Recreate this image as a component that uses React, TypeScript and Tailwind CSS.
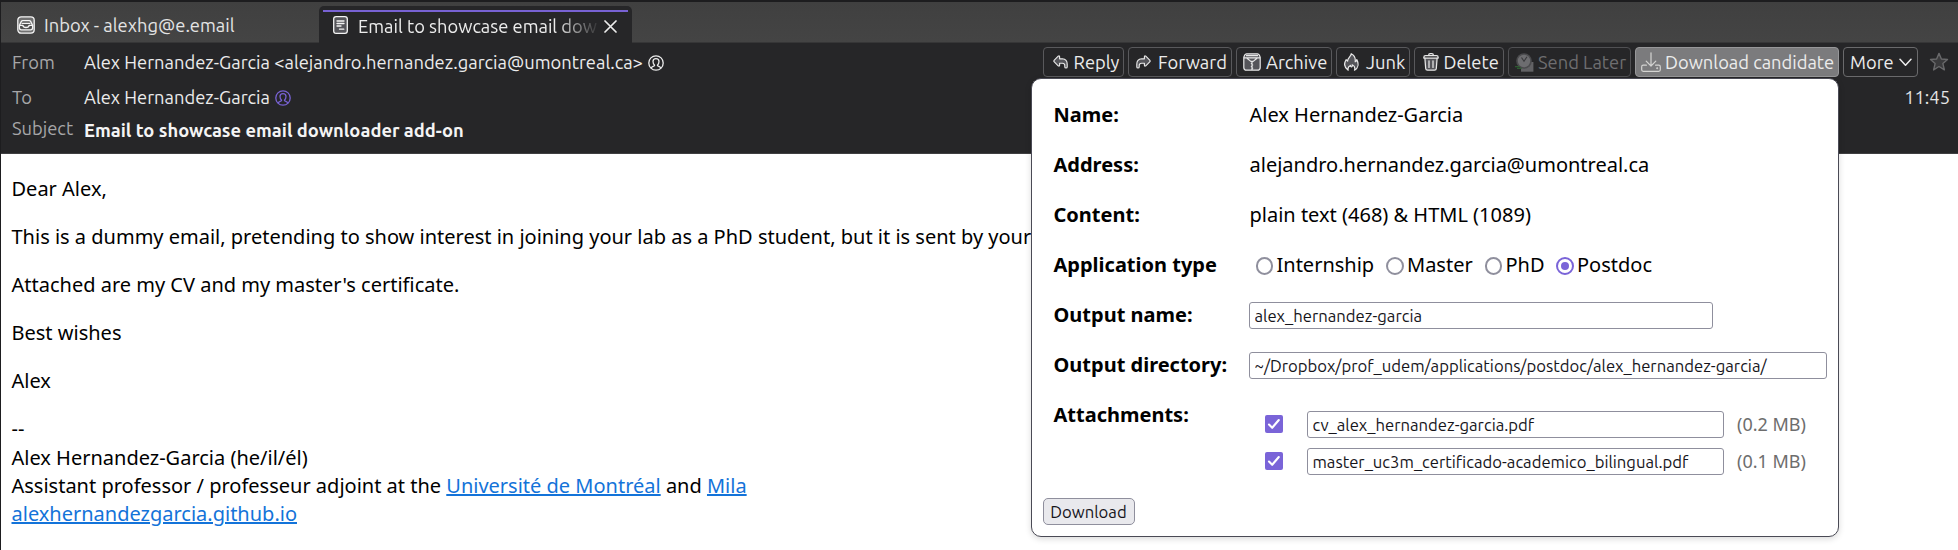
import type { ReactNode } from "react";

const svg = "block shrink-0";

function InboxIcon() {
  return (
    <svg className={svg} width="18" height="18" viewBox="0 0 18 18" fill="none" stroke="#f4f4f4" strokeWidth="1.3" strokeLinejoin="round">
      <rect x="0.8" y="0.8" width="16.4" height="16.4" rx="3.4" fill="#707070" />
      <path d="M2.4 9.4 4.4 5.4Q4.8 4.6 5.8 4.6H12.2Q13.2 4.6 13.6 5.4L15.6 9.4V11.7Q15.6 13.8 13.6 13.8H4.4Q2.4 13.8 2.4 11.7Z" fill="#505050" />
      <path d="M4.6 7.4H13.4M2.6 9.4H5.9C6.3 12.2 11.7 12.2 12.1 9.4H15.4" />
    </svg>
  );
}

function MessageIcon() {
  return (
    <svg className={svg} width="15" height="18" viewBox="0 0 15 18" fill="none" stroke="#f4f4f4" strokeWidth="1.3" strokeLinecap="round">
      <rect x="0.7" y="0.7" width="13.6" height="16.6" rx="2.4" fill="#55555a" />
      <path d="M4 5H11M4 7.5H11M4 10H8M6.5 13.2H10.8" />
    </svg>
  );
}

function ContactIcon({ color }: { color: string }) {
  return (
    <svg className={svg} width="16" height="16" viewBox="0 0 16 16" fill="none" stroke={color} strokeWidth="1.3" strokeLinejoin="round" strokeLinecap="round">
      <circle cx="8" cy="8" r="7.2" />
      <path d="M3.4 13C3.4 11.2 6.6 11.6 6.6 10.2C5.4 9.2 5 7.8 5 6.6C5 4.7 6.2 3.7 8 3.7S11 4.7 11 6.6C11 7.8 10.6 9.2 9.4 10.2C9.4 11.6 12.6 11.2 12.6 13" />
    </svg>
  );
}

function ReplyIcon({ flip = false }: { flip?: boolean }) {
  return (
    <svg className={svg} width="15" height="14" viewBox="0 0 15 14" fill="#55555a" stroke="#e8e8e8" strokeWidth="1.15" strokeLinejoin="round">
      <path transform={flip ? "matrix(-1 0 0 1 15 0)" : undefined} d="M1.3 6.9Q.4 6 1.3 5.1L5.2 1.2Q6.6 .3 6.6 2V3.8H9.4Q14.2 4.2 14.2 9.2V12Q14.2 13 13 13Q11.8 13 11.8 12V10.4Q11.8 8.2 9.4 8.2H6.6V10Q6.6 11.7 5.2 10.8Z" />
    </svg>
  );
}

function ArchiveIcon() {
  return (
    <svg className={svg} width="18" height="18" viewBox="0 0 18 18" fill="none" stroke="#e8e8e8" strokeWidth="1.2" strokeLinejoin="round">
      <path d="M0.8 4.2 1.7 2.1Q2.2 0.8 3.6 0.8H14.4Q15.8 0.8 16.3 2.1L17.2 4.2V14.4Q17.2 17.2 14.4 17.2H3.6Q0.8 17.2 0.8 14.4Z" fill="#55555a" />
      <path d="M1 4.8H17M3 2.7H15M4 5.2 7.8 8.4H10.2L14 5.2M9 8.6V17" />
      <path d="M7.8 10.4H9M9 12H10.2M7.8 13.6H9M9 15.2H10.2" strokeWidth="1" />
    </svg>
  );
}

function JunkIcon() {
  return (
    <svg className={svg} width="15" height="18" viewBox="0 0 15 18" fill="#55555a" stroke="#e8e8e8" strokeWidth="1.2" strokeLinejoin="round">
      <path d="M7.2 0.7C7.3 3.4 3.3 5.2 3.6 8.2L2.1 6.7C-0.2 10.6 0.5 14.7 4.2 17.2C3.5 14.8 4.6 13.3 6.6 12.4C6.4 13.3 6.8 13.9 7.6 13.8C8.5 13.6 8.4 12.4 8.2 11.8C10.8 13 11.3 15 10.5 17.2C14.4 14.9 14.9 10.6 12.8 6.6C12.6 7.7 12.3 8.4 11.2 8.8C11.6 5.2 10 2 7.2 0.7Z" />
    </svg>
  );
}

function TrashIcon() {
  return (
    <svg className={svg} width="16" height="18" viewBox="0 0 16 18" fill="none" stroke="#e8e8e8" strokeWidth="1.25" strokeLinejoin="round" strokeLinecap="round">
      <path d="M1.9 5.2 2.7 15.5Q2.8 17.2 4.5 17.2H11.5Q13.2 17.2 13.3 15.5L14.1 5.2" fill="#55555a" />
      <path d="M0.8 4.4Q0.8 2.6 2.6 2.6H13.4Q15.2 2.6 15.2 4.4V5.1H0.8ZM5.6 2.4Q5.6 0.7 7.2 0.7H8.8Q10.4 0.7 10.4 2.4M6 7.8V14.4M10 7.8V14.4" />
    </svg>
  );
}

function SendLaterIcon() {
  return (
    <svg className={svg} width="19" height="19" viewBox="0 0 19 19" fill="none">
      <path d="M6 9H18.4V18.7H6Z" fill="#626265" />
      <circle cx="9" cy="8" r="7.8" fill="#4b4b4e" />
      <circle cx="9" cy="8" r="6.2" fill="#6d6d70" />
      <path d="M6.5 4.5 9 8.3 12 3.8" stroke="#39393c" strokeWidth="1.1" />
      <path d="M0 13.6H4.5M2 15.3H6.5" stroke="#2d5b31" strokeWidth="1.3" />
    </svg>
  );
}

function DownloadIcon() {
  return (
    <svg className={svg} width="20" height="20" viewBox="0 0 20 20" fill="none" stroke="#d4d4d2" strokeWidth="1.2" strokeLinecap="round" strokeLinejoin="round">
      <path d="M10 0.8V13.8M5.2 9.2 10 14 14.8 9.2" />
      <path d="M5.4 13.2H2.2Q0.7 13.2 0.7 14.7V17.8Q0.7 19.3 2.2 19.3H17.8Q19.3 19.3 19.3 17.8V14.7Q19.3 13.2 17.8 13.2H14.6" />
      <circle cx="16.2" cy="16.3" r="0.4" />
    </svg>
  );
}

function ToolButton({ icon, label, box, tone = "border-[#59595c] text-[#ececec]" }: { icon: ReactNode; label: string; box: string; tone?: string }) {
  return (
    <button className={`flex h-[30px] shrink-0 items-center rounded border whitespace-nowrap leading-[22px] ${box} ${tone}`}>
      {icon}
      <span>{label}</span>
    </button>
  );
}

function Row({ label, children }: { label: string; children: ReactNode }) {
  return (
    <div className="flex h-[50px] items-start">
      <div className="w-[195.5px] shrink-0 font-bold">{label}</div>
      {children}
    </div>
  );
}

const ubuntu = "font-[Ubuntu,'Noto_Sans',sans-serif]";

function TextField({ value, box }: { value: string; box: string }) {
  return (
    <input
      readOnly
      value={value}
      className={`h-[27px] rounded-[3px] border border-[#8f8f9d] bg-white px-[4.5px] text-[16.67px] leading-[20px] text-[#15141a] outline-none ${ubuntu} ${box}`}
    />
  );
}

function Radio({ label, checked = false, box }: { label: string; checked?: boolean; box: string }) {
  return (
    <label className={`flex shrink-0 items-start whitespace-nowrap ${box}`}>
      <span className={`mt-[6px] mr-[3.5px] flex size-[17.5px] items-center justify-center rounded-full border-2 ${checked ? "border-[#7a64d8]" : "border-[#8f8f9d]"}`}>
        {checked && <span className="size-[8px] rounded-full bg-[#7a64d8]" />}
      </span>
      {label}
    </label>
  );
}

function Attachment({ name, size }: { name: string; size: string }) {
  return (
    <div className="flex h-[37px] items-start">
      <span className="mt-1 flex size-[18px] items-center justify-center rounded-[2px] bg-[#7a64d8]">
        <svg width="14" height="14" viewBox="0 0 14 14" fill="none" stroke="#fff" strokeWidth="2.1" strokeLinecap="round" strokeLinejoin="round">
          <path d="M2 7.6 5.2 10.8 11.8 3" />
        </svg>
      </span>
      <TextField value={name} box="ml-[24px] w-[417px]" />
      <span className="ml-[13px] text-[18px] leading-[27px] text-[#6d6d6d]">{size}</span>
    </div>
  );
}

export default function App() {
  return (
    <div className={`relative flex h-[550px] w-[1958px] flex-col overflow-hidden border-t-2 border-l border-[#1d1d1f] bg-white text-[18.33px] text-[#ececec] ${ubuntu}`}>
      <div className="flex h-[41px] shrink-0 items-end border-b border-[#363637] bg-linear-to-b from-[#404040] to-[#444444]">
        <div className="flex h-[40px] w-[318px] items-center pt-[6px] pl-[16px] leading-[22px]">
          <InboxIcon />
          <span className="-mt-px ml-[9px] text-[#e4e4e4]">Inbox - alexhg@e.email</span>
        </div>
        <div className="-mb-px flex h-[37px] w-[313px] flex-col rounded-t-[5px] bg-[#262628] px-1 pt-1">
          <div className="h-[2px] w-full bg-[#7862d3]" />
          <div className="flex items-start pt-[3px] pl-[10px] leading-[22px]">
            <span className="mt-[1px]"><MessageIcon /></span>
            <span className="ml-[10px] w-[240px] whitespace-nowrap [mask-image:linear-gradient(to_right,black_198px,transparent_243px)]">Email to showcase email dow</span>
            <svg className="mt-[5px] ml-[6px] block" width="13" height="13" viewBox="0 0 13 13" stroke="#ececec" strokeWidth="1.7" strokeLinecap="round">
              <path d="M1 1 12 12M12 1 1 12" />
            </svg>
          </div>
        </div>
      </div>

      <header className="flex h-[111px] shrink-0 justify-between border-b border-[#3f3f41] bg-[#262628]">
        <div className="grid grid-cols-[72px_auto] grid-rows-[35px_32px_30px] pt-[8px] pl-[11px] leading-[22px]">
          <span className="text-[#a6a6a8]">From</span>
          <span className="flex gap-[5px] whitespace-nowrap">
            Alex Hernandez-Garcia &lt;alejandro.hernandez.garcia@umontreal.ca&gt;
            <span className="mt-[4px]"><ContactIcon color="#ececec" /></span>
          </span>
          <span className="text-[#a6a6a8]">To</span>
          <span className="flex gap-[5px]">
            Alex Hernandez-Garcia
            <span className="mt-[4px]"><ContactIcon color="#7862d3" /></span>
          </span>
          <span className="-mt-px text-[#a6a6a8]">Subject</span>
          <span className="mt-px font-bold tracking-[0.015px] text-[#f4f4f4]">Email to showcase email downloader add-on</span>
        </div>
        <div className="flex flex-col items-end pt-[4px] pr-[8px]">
          <div className="flex items-center gap-1">
            <ToolButton icon={<ReplyIcon />} label="Reply" box="w-[81px] gap-[6px] pl-[8.5px]" />
            <ToolButton icon={<ReplyIcon flip />} label="Forward" box="w-[104px] gap-[7px] pl-[7px]" />
            <ToolButton icon={<ArchiveIcon />} label="Archive" box="w-[96px] gap-[5px] pl-[6px]" />
            <ToolButton icon={<JunkIcon />} label="Junk" box="w-[74px] gap-[7px] pl-[7px]" />
            <ToolButton icon={<TrashIcon />} label="Delete" box="w-[90px] gap-[5px] pl-[7.5px]" />
            <ToolButton icon={<SendLaterIcon />} label="Send Later" box="w-[123px] gap-[4px] pl-[6px]" tone="border-[#505053] text-[#6e6e70]" />
            <ToolButton icon={<DownloadIcon />} label="Download candidate" box="w-[204px] gap-[4px] pl-[5px]" tone="border-[#979799] bg-[#7b7b7d] text-[#ececec]" />
            <button className="flex h-[30px] w-[75px] items-center rounded border border-[#6a6a6c] pl-[6px] leading-[22px]">
              <span>More</span>
              <svg className="ml-[5px]" width="13" height="9" viewBox="0 0 13 9" fill="none" stroke="#ececec" strokeWidth="1.5" strokeLinecap="round" strokeLinejoin="round">
                <path d="M1 1.2 6.5 7.2 12 1.2" />
              </svg>
            </button>
            <svg className="mr-px ml-[7px]" width="20" height="20" viewBox="0 0 20 20" fill="#3b3b3d" stroke="#69696b" strokeWidth="1.4" strokeLinejoin="round">
              <path d="M10 1.4 12.4 7 18.5 7.5 13.9 11.6 15.4 17.9 10 14.5 4.6 17.9 6.1 11.6 1.5 7.5 7.6 7Z" />
            </svg>
          </div>
          <span className="mt-[9px] leading-[22px] text-[#e4e4e4]">11:45</span>
        </div>
      </header>

      <main className="flex flex-col gap-5 pt-[21px] pl-[10.5px] font-['Noto_Sans',sans-serif] text-[20px] leading-[28.1px] whitespace-nowrap text-black">
        <p>Dear Alex,</p>
        <p>This is a dummy email, pretending to show interest in joining your lab as a PhD student, but it is sent by your</p>
        <p>Attached are my CV and my master's certificate.</p>
        <p>Best wishes</p>
        <p>Alex</p>
        <div className="leading-[28.2px]">
          <p>--</p>
          <p>Alex Hernandez-Garcia (he/il/él)</p>
          <p>
            Assistant professor / professeur adjoint at the <a className="text-[#1373d9] underline">Université de Montréal</a> and <a className="text-[#1373d9] underline">Mila</a>
          </p>
          <p><a className="text-[#1373d9] underline">alexhernandezgarcia.github.io</a></p>
        </div>
      </main>

      <section className="absolute top-[76px] left-[1030px] flex h-[459px] w-[808px] flex-col rounded-[10px] border border-[#4a4a55] bg-white pt-[22px] pl-[21.5px] font-['Noto_Sans',sans-serif] text-[20px] leading-[28px] whitespace-nowrap text-black shadow-[0_2px_6px_rgba(0,0,0,0.15)]">
        <Row label="Name:"><span className="ml-[0.5px]">Alex Hernandez-Garcia</span></Row>
        <Row label="Address:"><span className="ml-[0.5px]">alejandro.hernandez.garcia@umontreal.ca</span></Row>
        <Row label="Content:"><span className="ml-[0.5px]">plain text (468) &amp; HTML (1089)</span></Row>
        <Row label="Application type">
          <Radio label="Internship" box="ml-[6.5px] w-[130.5px]" />
          <Radio label="Master" box="w-[98.5px]" />
          <Radio label="PhD" box="w-[71.5px]" />
          <Radio label="Postdoc" checked box="" />
        </Row>
        <Row label="Output name:"><TextField value="alex_hernandez-garcia" box="mt-[1px] w-[464px]" /></Row>
        <Row label="Output directory:"><TextField value="~/Dropbox/prof_udem/applications/postdoc/alex_hernandez-garcia/" box="mt-[1px] w-[578px]" /></Row>
        <div className="flex h-[97px] items-start">
          <div className="w-[211.5px] shrink-0 font-bold">Attachments:</div>
          <div className="pt-[10px]">
            <Attachment name="cv_alex_hernandez-garcia.pdf" size="(0.2 MB)" />
            <Attachment name="master_uc3m_certificado-academico_bilingual.pdf" size="(0.1 MB)" />
          </div>
        </div>
        <button className={`-ml-[11px] h-[27px] w-[92px] rounded-[5px] border border-[#8f8f9d] bg-[#e9e9ed] text-[16.67px] leading-[24px] text-[#15141a] ${ubuntu}`}>Download</button>
      </section>
    </div>
  );
}
